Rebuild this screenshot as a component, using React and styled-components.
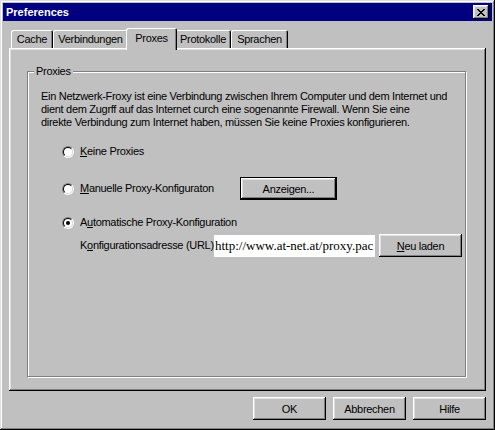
import React from "react";
import styled, { createGlobalStyle } from "styled-components";

const GlobalStyle = createGlobalStyle`
	body {
		margin: 0;
		background: #c0c0c0;
		font-family: "Liberation Sans", Arial, sans-serif;
		font-size: 11px;
		letter-spacing: -0.3px;
		color: #000;
	}
`;

// classic 3d bevels
const raised = `
	inset -1px -1px 0 #000,
	inset 1px 1px 0 #fff,
	inset -2px -2px 0 #808080,
	inset 2px 2px 0 #dfdfdf
`;

const tabs = [
	{ label: "Cache", w: 42 },
	{ label: "Verbindungen", w: 75 },
	{ label: "Proxes", w: 47, active: true },
	{ label: "Protokolle", w: 56 },
	{ label: "Sprachen", w: 57 },
];

const CloseGlyph = () => {
	// 8x7 pixel cross
	const rows = [
		[0, 6],
		[1, 5],
		[2, 4],
		[3],
		[2, 4],
		[1, 5],
		[0, 6],
	];
	return (
		<svg width="8" height="7" viewBox="0 0 8 7" shapeRendering="crispEdges">
			{rows.map((xs, y) =>
				xs.map((x) => <rect key={`${y}-${x}`} x={x} y={y} width="2" height="1" fill="#000" />)
			)}
		</svg>
	);
};

const Radio = ({ checked }) => (
	<RadioOuter>
		<RadioInner>{checked && <RadioDot />}</RadioInner>
	</RadioOuter>
);

const App = () => {
	return (
		<>
			<GlobalStyle />
			<Window>
				<TitleBar>
					<Title>Preferences</Title>
					<CloseButton>
						<CloseGlyph />
					</CloseButton>
				</TitleBar>
				<Body>
					<TabStrip>
						{tabs.map((t) => (
							<Tab key={t.label} $w={t.w} $active={t.active}>
								{t.label}
							</Tab>
						))}
					</TabStrip>
					<Panel>
						<Group>
							<Legend>Proxies</Legend>
							<GroupContent>
								<Intro>
									Ein Netzwerk-Froxy ist eine Verbindung zwischen Ihrem Computer und dem Internet und
									<br />
									dient dem Zugrff auf das Internet curch eine sogenannte Firewall. Wenn Sie eine
									<br />
									direkte Verbindung zum Internet haben, müssen Sie keine Proxies konfigurieren.
								</Intro>
								<Options>
									<OptionRow $mt={16}>
										<Radio />
										<RadioLabel>
											<u>K</u>eine Proxies
										</RadioLabel>
									</OptionRow>
									<OptionRow $mt={19}>
										<Radio />
										<RadioLabel $w={160}>
											<u>M</u>anuelle Proxy-Konfiguraton
										</RadioLabel>
										<Button $w={97} $default>
											Anzei<u>g</u>en...
										</Button>
									</OptionRow>
									<OptionRow $mt={16}>
										<Radio checked />
										<RadioLabel>
											A<u>u</u>tomatische Proxy-Konfiguration
										</RadioLabel>
									</OptionRow>
									<UrlRow>
										<UrlLabel>
											K<u>o</u>nfigurationsadresse (URL):
										</UrlLabel>
										<UrlInput readOnly value="http://www.at-net.at/proxy.pac" />
										<Button $w={83} $ml={4}>
											<u>N</u>eu laden
										</Button>
									</UrlRow>
								</Options>
							</GroupContent>
						</Group>
					</Panel>
					<ButtonRow>
						<Button $w={73}>OK</Button>
						<Button $w={73}>Abbrechen</Button>
						<Button $w={73}>Hilfe</Button>
					</ButtonRow>
				</Body>
			</Window>
		</>
	);
};

const Window = styled.div`
	width: 495px;
	height: 430px;
	box-sizing: border-box;
	padding: 3px;
	display: flex;
	flex-direction: column;
	background: #c0c0c0;
	box-shadow: inset -1px -1px 0 #000, inset 1px 1px 0 #dfdfdf, inset -2px -2px 0 #808080,
		inset 2px 2px 0 #fff;
`;
const TitleBar = styled.div`
	height: 18px;
	display: flex;
	align-items: center;
	justify-content: space-between;
	background: #000080;
	padding: 0 3px;
`;
const Title = styled.span`
	color: #fff;
	font-weight: 700;
	font-size: 11px;
	letter-spacing: 0;
`;
const CloseButton = styled.div`
	width: 16px;
	height: 14px;
	display: flex;
	align-items: center;
	justify-content: center;
	background: #c0c0c0;
	box-shadow: ${raised};
`;
const Body = styled.div`
	flex: 1;
	display: flex;
	flex-direction: column;
	padding: 7px 6px 7px 6px;
`;
const TabStrip = styled.div`
	height: 20px;
	display: flex;
	align-items: flex-end;
	padding-left: 2px;
`;
const Tab = styled.div`
	position: relative;
	box-sizing: border-box;
	width: ${(p) => (p.$active ? p.$w + 4 : p.$w)}px;
	height: ${(p) => (p.$active ? 22 : 18)}px;
	margin: 0 ${(p) => (p.$active ? -2 : 0)}px ${(p) => (p.$active ? -2 : 0)}px;
	padding-bottom: ${(p) => (p.$active ? 3 : 0)}px;
	z-index: ${(p) => (p.$active ? 2 : 0)};
	display: flex;
	align-items: center;
	justify-content: center;
	background: #c0c0c0;
	border-radius: 2px 2px 0 0;
	box-shadow: inset 1px 1px 0 #fff, inset -1px 0 0 #000, inset -2px 0 0 #808080;
`;
const Panel = styled.div`
	height: 343px;
	box-sizing: border-box;
	display: flex;
	flex-direction: column;
	padding: 17px 20px 14px 18px;
	box-shadow: ${raised};
`;
const Group = styled.fieldset`
	flex: 1;
	margin: 0;
	padding: 0;
	min-width: 0;
	border: 1px solid #808080;
	box-shadow: 1px 1px 0 #fff, inset 1px 1px 0 #fff;
`;
const Legend = styled.legend`
	margin-left: 6px;
	padding: 0 2px;
	line-height: 13px;
	background: #c0c0c0;
`;
const GroupContent = styled.div`
	padding: 12px 13px 0 13px;
`;
const Intro = styled.p`
	margin: 0;
	line-height: 13px;
	white-space: nowrap;
`;
const Options = styled.div`
	display: flex;
	flex-direction: column;
	padding-left: 21px;
`;
const OptionRow = styled.div`
	display: flex;
	align-items: center;
	margin-top: ${(p) => p.$mt}px;
`;
const RadioOuter = styled.span`
	width: 12px;
	height: 12px;
	flex-shrink: 0;
	box-sizing: border-box;
	border-radius: 50%;
	border: 1px solid;
	border-color: #808080 #fff #fff #808080;
	display: flex;
	align-items: center;
	justify-content: center;
`;
const RadioInner = styled.span`
	width: 10px;
	height: 10px;
	box-sizing: border-box;
	border-radius: 50%;
	border: 1px solid;
	border-color: #000 #dfdfdf #dfdfdf #000;
	background: #fff;
	display: flex;
	align-items: center;
	justify-content: center;
`;
const RadioDot = styled.span`
	width: 4px;
	height: 4px;
	border-radius: 50%;
	background: #000;
`;
const RadioLabel = styled.span`
	margin-left: 6px;
	line-height: 13px;
	white-space: nowrap;
	${(p) => p.$w && `width: ${p.$w}px;`}
`;
const UrlRow = styled.div`
	display: flex;
	align-items: flex-start;
	margin-top: 5px;
	padding-left: 18px;
`;
const UrlLabel = styled.span`
	flex: 0 0 134px;
	min-width: 0;
	margin-top: 5px;
	line-height: 13px;
	white-space: nowrap;
`;
const UrlInput = styled.input`
	position: relative;
	flex: 0 0 158px;
	height: 22px;
	margin: 1px 0 0;
	padding: 0 0 0 1px;
	box-sizing: border-box;
	border: none;
	outline: none;
	background: #fff;
	font-family: "Liberation Serif", "Times New Roman", serif;
	font-size: 13px;
	letter-spacing: 0;
	color: #000;
`;
const Button = styled.button`
	flex-shrink: 0;
	width: ${(p) => p.$w}px;
	height: 23px;
	margin-left: ${(p) => p.$ml || 0}px;
	padding: 0;
	box-sizing: border-box;
	font-family: "Liberation Sans", Arial, sans-serif;
	font-size: 11px;
	letter-spacing: -0.3px;
	color: #000;
	background: #c0c0c0;
	border: ${(p) => (p.$default ? "1px solid #000" : "none")};
	box-shadow: ${raised};
`;
const ButtonRow = styled.div`
	display: flex;
	justify-content: flex-end;
	gap: 7px;
	margin-top: 6px;
`;

export default App;
